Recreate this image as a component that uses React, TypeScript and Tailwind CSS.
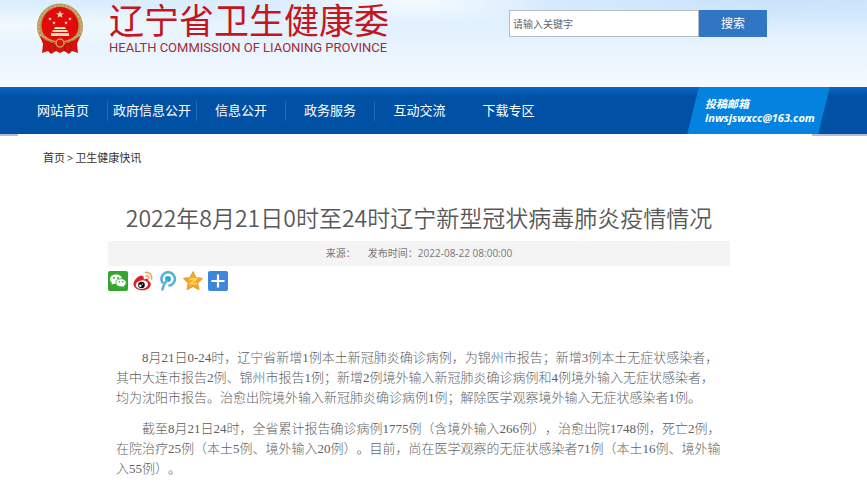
import React, { useState } from 'react';

const NAV_ITEMS = ['网站首页', '政府信息公开', '信息公开', '政务服务', '互动交流', '下载专区'];

const PARAGRAPHS = [
    '8月21日0-24时，辽宁省新增1例本土新冠肺炎确诊病例，为锦州市报告；新增3例本土无症状感染者，其中大连市报告2例、锦州市报告1例；新增2例境外输入新冠肺炎确诊病例和4例境外输入无症状感染者，均为沈阳市报告。治愈出院境外输入新冠肺炎确诊病例1例；解除医学观察境外输入无症状感染者1例。',
    '截至8月21日24时，全省累计报告确诊病例1775例（含境外输入266例），治愈出院1748例，死亡2例，在院治疗25例（本土5例、境外输入20例）。目前，尚在医学观察的无症状感染者71例（本土16例、境外输入55例）。',
];

const STAR = 'M0-10 2.6-3.4 9.6-3 4.2 1.4 6 8.2 0 4.4-6 8.2-4.2 1.4-9.6-3-2.6-3.4Z';

const Emblem: React.FC = () => (
    <svg viewBox="0 0 48 52" className="h-[52px] w-12 shrink-0" aria-hidden="true">
        <circle cx="24" cy="23.500" r="23" fill="#b99a5c" />
        <circle cx="24" cy="23.500" r="21" fill="none" stroke="#cdb57b" strokeWidth="1.500" strokeDasharray="2 2" />
        <circle cx="24" cy="22.500" r="18.500" fill="#e10a0c" />
        <path d="M4 33 7 35c9 8 25 8 34 0l3-2-3 8 1 9-6-2-3 3-5-3-4 2-4-2-5 3-3-3-6 2 1-9Z" fill="#d8120f" />
        <path d="M8 33c9 8 23 8 32 0" fill="none" stroke="#cda75c" strokeWidth="1.500" />
        <path d="M11 38c8 6 18 6 26 0M13 42l1 7M35 42l-1 7M19 43v5M29 43v5" fill="none" stroke="#a3150d" strokeWidth="1" />
        <circle cx="24" cy="40" r="4" fill="#dd1511" stroke="#c9a25a" strokeWidth="1.500" />
        <g fill="#f8dfb5">
            <path d={STAR} transform="translate(24 11.500) scale(.4)" />
            <path d={STAR} transform="translate(14 16) scale(.19)" />
            <path d={STAR} transform="translate(34 16) scale(.19)" />
            <path d={STAR} transform="translate(18 20) scale(.19)" />
            <path d={STAR} transform="translate(30 20) scale(.19)" />
            <path d="M19 24h10l1 2H18Z" />
            <path d="M17 27h14l1 2H16Z" />
            <path d="M15 30h18v3H15Z" />
        </g>
    </svg>
);

const WechatIcon: React.FC = () => (
    <svg viewBox="0 0 20 20" className="size-5" aria-hidden="true">
        <rect width="20" height="20" rx="2" fill="#35a52f" />
        <path d="M8 3.500c-3.400 0-6 2-6 4.700 0 1.500.8 2.800 2 3.600L3.500 13.800l2.300-1.100c3.900 1.100 8.200-.8 8.200-4.500C14 5.500 11.400 3.500 8 3.500Z" fill="#fff" />
        <path d="M13 7.700c-3 0-5.200 1.700-5.200 4.100s2.200 4.100 5.200 4.100l1.500-.2 2 1.100-.5-1.800c1.300-.7 2.200-1.900 2.200-3.200 0-2.400-2.200-4.100-5.200-4.100Z" fill="#fff" stroke="#35a52f" strokeWidth=".8" />
        <g fill="#35a52f">
            <circle cx="6" cy="7" r=".9" />
            <circle cx="10" cy="7" r=".9" />
            <circle cx="11.400" cy="10.800" r=".8" />
            <circle cx="14.800" cy="10.800" r=".8" />
        </g>
    </svg>
);

const WeiboIcon: React.FC = () => (
    <svg viewBox="0 0 20 20" className="size-5" aria-hidden="true">
        <path d="M7.500 4.800C4.500 5.500.5 9.700.5 13c0 3.600 4 6.300 8.700 6.300 5.300 0 8.600-3.200 8.600-6.100 0-1.700-1.100-2.700-2.500-3.100.7-1.900-1-3.200-4.600-1.700.6-2.500-.4-4.100-3.200-3.600Z" fill="#d91f2b" />
        <ellipse cx="8.900" cy="13.700" rx="6.200" ry="4.300" fill="#fff" transform="rotate(-8 8.900 13.700)" />
        <circle cx="8.500" cy="14" r="3.300" fill="#16090b" />
        <circle cx="7.300" cy="14.800" r="1.200" fill="#fff" />
        <circle cx="9.500" cy="13.100" r=".6" fill="#fff" />
        <path d="M12.500 1.500c3.800-.7 7 2.700 6 6.500M13 4.800c1.800-.4 3.200 1 2.700 2.700" fill="none" stroke="#efa35b" strokeWidth="1.600" strokeLinecap="round" />
    </svg>
);

const TencentWeiboIcon: React.FC = () => (
    <svg viewBox="0 0 20 20" className="size-5" aria-hidden="true">
        <path d="M4.500 11.500A6.700 6.700 0 1 1 11.500 14.500" fill="none" stroke="#58b3d3" strokeWidth="2.600" strokeLinecap="round" />
        <circle cx="10" cy="8" r="2.900" fill="#2fa5d0" />
        <path d="M9 9.500C6.500 12 5 15 4.500 18.500" fill="none" stroke="#58b3d3" strokeWidth="2.400" strokeLinecap="round" />
    </svg>
);

const QzoneIcon: React.FC = () => (
    <svg viewBox="0 0 20 20" className="size-5" aria-hidden="true">
        <path d="m10 1 2.700 5.800 6.400.7-4.700 4.400 1.300 6.400L10 15.100l-5.700 3.200 1.300-6.400L.9 7.500l6.400-.7Z" fill="#f5ab2c" stroke="#eba028" strokeWidth="1.500" strokeLinejoin="round" />
        <path d="M6.500 8c2.300-.5 4.500-.4 6.800 0l-5.800 4.400c2.300.4 4.400.4 6.600 0" fill="none" stroke="#fbdc62" strokeWidth="1.500" />
    </svg>
);

const MoreIcon: React.FC = () => (
    <svg viewBox="0 0 20 20" className="size-5" aria-hidden="true">
        <rect width="20" height="20" rx="2" fill="#3d86dc" />
        <path d="M10 3.500v13M3.500 10h13" stroke="#fff" strokeWidth="2.200" />
    </svg>
);

const SHARE_LINKS = [
    { label: '微信', Icon: WechatIcon },
    { label: '新浪微博', Icon: WeiboIcon },
    { label: '腾讯微博', Icon: TencentWeiboIcon },
    { label: 'QQ空间', Icon: QzoneIcon },
    { label: '更多', Icon: MoreIcon },
];

const Header: React.FC = () => {
    const [keyword, setKeyword] = useState<string>('');

    return (
        <header className="bg-linear-to-b from-[#d9edfd] via-[#e6f3fe] to-[#f6fafe]">
            <div className="flex items-start justify-between bg-[radial-gradient(ellipse_at_48%_0%,rgba(255,255,255,0.75),transparent_22%),radial-gradient(ellipse_at_2%_30%,rgba(255,255,255,0.6),transparent_25%),radial-gradient(ellipse_at_90%_0%,rgba(190,218,250,0.6),transparent_30%)] pb-8 pl-9 pr-[100px]">
                <a href="#" className="flex items-start gap-[25px] pt-[3px]">
                    <Emblem />
                    <span className="flex flex-col whitespace-nowrap font-['Liberation_Sans','Noto_Sans_CJK_SC',sans-serif] text-[#c4161c]">
                        <span className="text-[35px] leading-[38px]">辽宁省卫生健康委</span>
                        <span className="font-[Roboto] text-[13px] leading-[14px] text-[#a02c38]">HEALTH COMMISSION OF LIAONING PROVINCE</span>
                    </span>
                </a>
                <form className="flex pt-2.5" onSubmit={(e) => e.preventDefault()}>
                    <input
                        type="text"
                        aria-label="请输入关键字"
                        placeholder="请输入关键字"
                        value={keyword}
                        onChange={(e) => setKeyword(e.target.value)}
                        className="h-[27px] w-[190px] border border-[#b5bcc4] bg-white px-[3px] text-[10px] text-[#555] placeholder:text-[#666]"
                    />
                    <button type="submit" className="h-[27px] w-[68px] bg-[#3176c5] text-xs text-white">搜索</button>
                </form>
            </div>
        </header>
    );
};

const NavBar: React.FC = () => (
    <nav className="flex h-[47px] items-stretch justify-between bg-linear-to-b from-[#0868c4] via-[#0050a4] via-20% to-[#0050a4] pl-[19px] pr-[43px] text-white">
        <ul className="flex items-center">
            {NAV_ITEMS.map((item, index) => (
                <li
                    key={item}
                    className={`flex h-5 w-[89px] items-center justify-center whitespace-nowrap text-[13px] ${index < 4 ? 'border-r border-[#2467b5]' : ''}`}
                >
                    <a href="#">{item}</a>
                </li>
            ))}
        </ul>
        <a href="mailto:lnwsjswxcc@163.com" className="relative flex w-[131px] flex-col justify-center pl-3 font-bold italic">
            <span className="absolute inset-0 -skew-x-14 bg-[#0482df]" />
            <span className="relative text-[11px] leading-[14px]">投稿邮箱</span>
            <span className="relative text-[11px] leading-[14px]">lnwsjswxcc@163.com</span>
        </a>
    </nav>
);

const Article: React.FC = () => (
    <article className="pb-5 pl-[108px] pr-[137px] pt-[31px]">
        <h1 className="whitespace-nowrap text-center font-['Noto_Sans_CJK_SC',sans-serif] text-[23px] font-[350] leading-9 text-[#585858]">
            2022年8月21日0时至24时辽宁新型冠状病毒肺炎疫情情况
        </h1>
        <p className="mt-1.5 flex h-[25px] items-center justify-center gap-3 bg-[#f4f4f4] text-[10px] text-[#777]">
            <span>来源：</span>
            <span>发布时间：2022-08-22 08:00:00</span>
        </p>
        <div className="mt-[5px] flex gap-[5px]">
            {SHARE_LINKS.map(({ label, Icon }) => (
                <a key={label} href="#" aria-label={label}>
                    <Icon />
                </a>
            ))}
        </div>
        <div className="mt-[57px] flex flex-col gap-[11px] px-2 font-['Liberation_Serif','Noto_Sans_CJK_SC',serif] text-[13px] font-light leading-5 text-[#606060] [text-spacing-trim:space-all]">
            {PARAGRAPHS.map((text) => (
                <p key={text} className="indent-[26px]">{text}</p>
            ))}
        </div>
    </article>
);

const App: React.FC = () => {
    return (
        <div lang="zh-CN" className="min-h-screen bg-white font-['Open_Sans','Noto_Sans_CJK_SC',sans-serif]">
            <Header />
            <NavBar />
            <div className="flex h-0.5 justify-between">
                <span className="w-[18px] bg-[#b4bddb]" />
                <span className="w-[55px] bg-[#b4bddb]" />
            </div>
            <div className="flex gap-0.5 pl-[43px] pt-3 text-[11px] leading-5 text-[#333]">
                <a href="#">首页</a>
                <span>&gt;</span>
                <a href="#">卫生健康快讯</a>
            </div>
            <Article />
        </div>
    );
};

export default App;
